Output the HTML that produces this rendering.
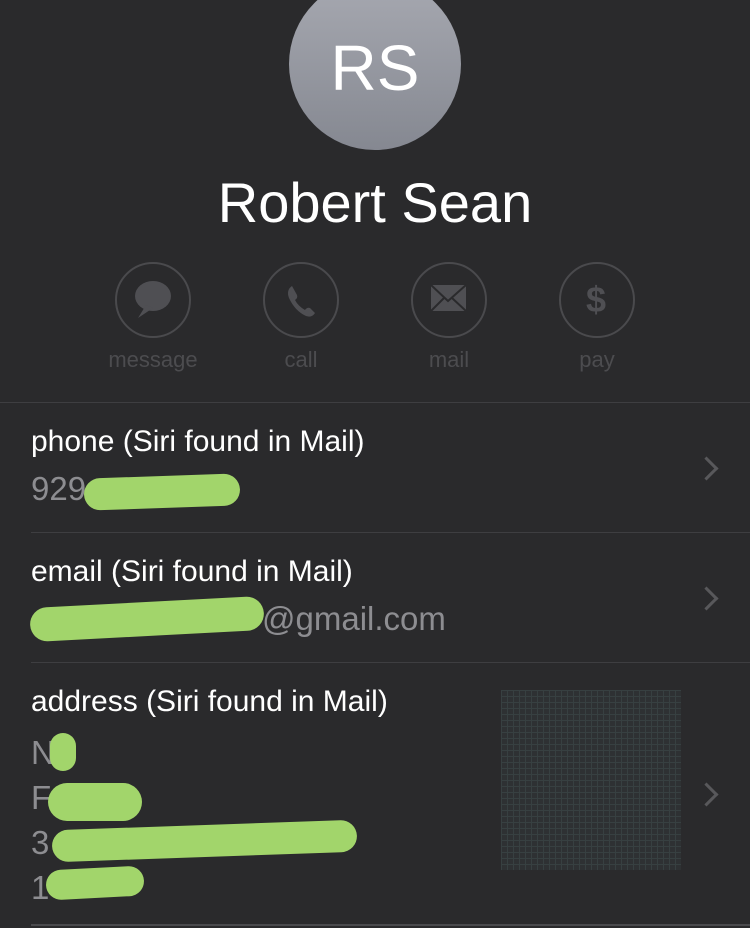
<!DOCTYPE html>
<html><head><style>
body{margin:0;width:750px;height:928px;background:#2a2a2c;font-family:"Liberation Sans",sans-serif;position:relative;overflow:hidden}
.a{position:absolute}
.av{left:289px;top:-22px;width:172px;height:172px;border-radius:50%;background:linear-gradient(#a7a9b1,#858891);color:#fff;font-size:64px;text-align:center;line-height:180px}
.name{left:0;width:750px;top:170px;text-align:center;color:#fff;font-size:56px}
.btn{width:72px;height:72px;border:2px solid #4a4a4d;border-radius:50%;top:262px}
.lbl{top:347px;width:140px;text-align:center;color:#4c4c4f;font-size:22px}
.t{color:#fff;font-size:30px;left:31px}
.v{color:#8d8d91;font-size:33px;left:31px}
.sep{height:1px;background:#3e3e41}
.chev{left:698px;width:14px;height:14px;border-right:3px solid #58585b;border-top:3px solid #58585b;transform:rotate(45deg)}
.g{background:#a2d56b;border-radius:30px}
</style></head><body>
<div class="a av">RS</div>
<div class="a name">Robert Sean</div>

<div class="a btn" style="left:115px"></div>
<div class="a btn" style="left:263px"></div>
<div class="a btn" style="left:411px"></div>
<div class="a btn" style="left:559px"></div>
<svg class="a" style="left:0;top:0" width="750" height="400">
<ellipse cx="153" cy="296" rx="18" ry="15" fill="#4f4f53"/>
<path d="M138 318 L146 305 L153 308 Z" fill="#4f4f53"/>
<path d="M292 286 q-6 4 -3 12 q6 13 17 18 q6 2 9 -3 l-5 -5 q-3 -1 -5 2 q-7 -4 -10 -10 q3 -2 2 -5 z" fill="#4f4f53"/>
<rect x="431" y="285" width="35" height="26" fill="#4f4f53"/>
<path d="M431 285 L448 301 L466 285 M431 311 L444 298 M466 311 L452 298" stroke="#2a2a2c" stroke-width="2" fill="none"/>
<text x="596" y="312" text-anchor="middle" font-size="36" font-weight="bold" fill="#4f4f53" font-family="Liberation Sans">$</text>
</svg>
<div class="a lbl" style="left:83px">message</div>
<div class="a lbl" style="left:231px">call</div>
<div class="a lbl" style="left:379px">mail</div>
<div class="a lbl" style="left:527px">pay</div>

<div class="a sep" style="left:0;width:750px;top:402px"></div>
<div class="a t" style="top:425px">phone (Siri found in Mail)</div>
<div class="a v" style="top:470px">929</div>
<div class="a g" style="left:84px;top:476px;width:156px;height:32px;transform:rotate(-2deg)"></div>
<div class="a chev" style="top:460px"></div>
<div class="a sep" style="left:31px;width:719px;top:532px"></div>

<div class="a t" style="top:555px">email (Siri found in Mail)</div>
<div class="a v" style="top:600px;left:262px">@gmail.com</div>
<div class="a g" style="left:30px;top:602px;width:234px;height:34px;transform:rotate(-3deg)"></div>
<div class="a chev" style="top:590px"></div>
<div class="a sep" style="left:31px;width:719px;top:662px"></div>

<div class="a t" style="top:685px">address (Siri found in Mail)</div>
<div class="a v" style="top:730px;line-height:45px">N<br>F&nbsp;&nbsp;&nbsp;&nbsp;&nbsp;&nbsp;&nbsp;g<br>3<br>1</div>
<div class="a g" style="left:50px;top:733px;width:26px;height:38px"></div>
<div class="a g" style="left:48px;top:783px;width:94px;height:38px"></div>
<div class="a g" style="left:52px;top:825px;width:305px;height:32px;transform:rotate(-2deg)"></div>
<div class="a g" style="left:46px;top:868px;width:98px;height:30px;transform:rotate(-3deg)"></div>
<div class="a" style="left:501px;top:690px;width:180px;height:180px;background:#2e3133;background-image:linear-gradient(#374041 1px,transparent 1px),linear-gradient(90deg,#374041 1px,transparent 1px);background-size:6px 6px"></div>
<div class="a chev" style="top:786px"></div>
<div class="a sep" style="left:31px;width:719px;top:924px;height:2px;background:#4a4a4d"></div>
</body></html>
